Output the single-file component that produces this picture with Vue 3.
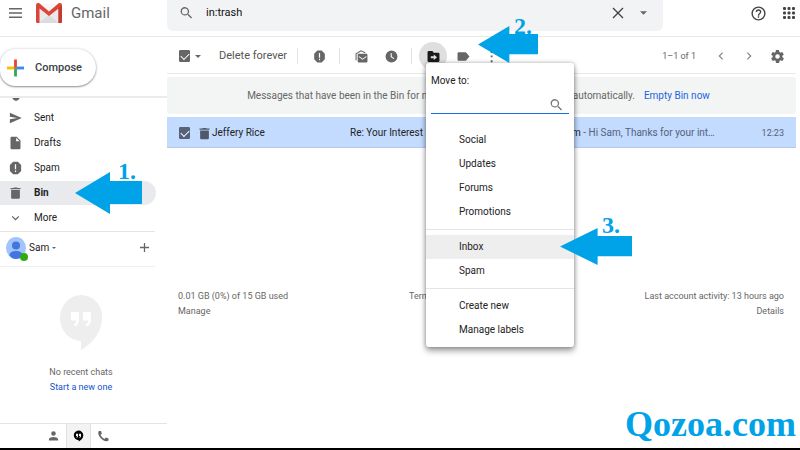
<script setup>
import { ref } from 'vue'

const query = ref('in:trash')
const labelFilter = ref('')
const allSelected = ref(true)
const rowSelected = ref(true)

const TRASH = 'M5 19c0 1.100.9 2 2 2h10c1.100 0 2-.9 2-2V7H5v12zM20 4h-4.500l-1-1h-5l-1 1H4v2h16V4z'
const SPAM = 'M8.300 2h7.400L21 7.300v9.400L15.700 22H8.300L3 16.700V7.300zM11 6v8h2V6zM11 16v2.300h2V16z'

const folders = [
  { name: 'Sent', path: 'M3 20.500L22 12 3 3.500v6.500l12 2-12 2z' },
  { name: 'Drafts', path: 'M6 2c-1.100 0-2 .9-2 2v16c0 1.100.9 2 2 2h12c1.100 0 2-.9 2-2V8l-6-6H6zm7 7V3.500L18.500 9H13z' },
  { name: 'Spam', path: SPAM },
  { name: 'Bin', path: TRASH, active: true },
  { name: 'More', path: 'M7.400 8.600L12 13.200l4.600-4.600L18 10l-6 6-6-6z' },
]

const menuGroups = [
  ['Social', 'Updates', 'Forums', 'Promotions'],
  ['Inbox', 'Spam'],
  ['Create new', 'Manage labels'],
]
</script>

<template>
  <div class="app">
    <header class="header">
      <div class="brand">
        <button class="icon-btn" aria-label="Main menu">
          <svg class="burger" viewBox="0 0 13 10"><path d="M0 0h13v1.500H0zM0 4.200h13v1.500H0zM0 8.400h13V10H0z" /></svg>
        </button>
        <svg class="logo" viewBox="0 0 26 21">
          <path d="M2 1h22v19H2z" fill="#e9e9e9" />
          <path d="M3 20l10-8 10 8z" fill="#dcdcdc" />
          <path d="M3 1l10 9 10-9z" fill="#f7f7f7" />
          <path d="M0 2Q0 0 2 0h1l10 8.500L23 0h1q2 0 2 2v16.500Q26 20 24.500 20H22.500V5.500L13 13 3.500 5.500V20h-2Q0 20 0 18.500z" fill="#db4437" />
          <path d="M22.500 5.500L26 2v16.500q0 1.500-1.500 1.500h-2z" fill="#c63b2f" />
        </svg>
        <span class="brand-name">Gmail</span>
      </div>
      <form class="search" role="search" @submit.prevent>
        <button class="icon-btn" aria-label="Search mail">
          <svg class="i-search" viewBox="2 2 20 20"><path d="M15.500 14h-.8l-.3-.3A6.500 6.500 0 1 0 13.700 14.400l.3.300v.8l5 5 1.500-1.500zM9.500 14a4.500 4.500 0 1 1 0-9 4.500 4.500 0 0 1 0 9z" /></svg>
        </button>
        <input v-model="query" class="search-input" type="text" aria-label="Search mail" />
        <button class="icon-btn" type="button" aria-label="Clear search">
          <svg class="i-close" viewBox="0 0 12 12"><path d="M1 1l10 10M11 1L1 11" fill="none" stroke="#444" stroke-width="1.400" /></svg>
        </button>
        <button class="icon-btn" type="button" aria-label="Search options">
          <svg class="i-caret" viewBox="0 0 8 4"><path d="M0 0h8L4 4z" /></svg>
        </button>
      </form>
      <div class="header-tools">
        <button class="icon-btn" aria-label="Support">
          <svg class="i-help" viewBox="0 0 24 24"><path d="M11 18h2v-2h-2zM12 2a10 10 0 1 0 0 20 10 10 0 0 0 0-20zm0 18a8 8 0 1 1 0-16 8 8 0 0 1 0 16zm0-14a4 4 0 0 0-4 4h2a2 2 0 1 1 4 0c0 2-3 1.800-3 5h2c0-2.300 3-2.500 3-5a4 4 0 0 0-4-4z" /></svg>
        </button>
        <button class="icon-btn" aria-label="Google apps">
          <svg class="i-apps" viewBox="0 0 12 12">
            <template v-for="r in 3" :key="r">
              <rect v-for="c in 3" :key="c" :x="(c - 1) * 4.5" :y="(r - 1) * 4.5" width="3" height="3" rx="1" />
            </template>
          </svg>
        </button>
      </div>
    </header>

    <div class="body">
      <aside class="sidebar">
        <div class="compose-area">
          <button class="compose">
            <svg class="plus" viewBox="0 0 18 18">
              <path d="M7.500 0h3v7.500l-3 3z" fill="#ea4335" />
              <path d="M0 7.500h7.500v3H0z" fill="#fbbc04" />
              <path d="M7.500 10.500l3-3V18h-3z" fill="#34a853" />
              <path d="M10.500 7.500H18v3h-7.500z" fill="#4285f4" />
            </svg>
            <span>Compose</span>
          </button>
        </div>
        <nav class="folders" aria-label="Folders">
          <svg class="clipped" viewBox="0 0 10 4"><path d="M0 0h10Q8 4 5 4T0 0z" /></svg>
          <a v-for="f in folders" :key="f.name" href="#" class="folder" :class="{ active: f.active }">
            <svg class="i-folder" viewBox="0 0 24 24"><path :d="f.path" fill-rule="evenodd" /></svg>
            <span>{{ f.name }}</span>
            <span v-if="f.active" class="callout callout-bin">
              <svg class="arrow arrow-wide" viewBox="0 0 67 42" preserveAspectRatio="none"><path d="M0 21L35 0v9h32v23H35v10z" /></svg>
              <span class="step">1.</span>
            </span>
          </a>
        </nav>
        <div class="account">
          <span class="avatar">
            <svg viewBox="0 0 20 22">
              <ellipse cx="10" cy="11" rx="10" ry="11" fill="#a2c4fb" />
              <circle cx="10" cy="8.500" r="4" fill="#4175df" />
              <path d="M3.500 18.500Q3.500 14 10 14t6.500 4.500Q14 22 10 22t-6.500-3.500z" fill="#4175df" />
            </svg>
            <i class="online"></i>
          </span>
          <button class="account-name">Sam <svg class="i-tiny" viewBox="0 0 8 4"><path d="M0 0h8L4 4z" /></svg></button>
          <button class="icon-btn add" aria-label="New conversation">
            <svg viewBox="0 0 10 10"><path d="M4.300 0h1.400v4.300H10v1.400H5.700V10H4.300V5.700H0V4.300h4.300z" /></svg>
          </button>
        </div>
        <div class="chats">
          <svg class="hangouts" viewBox="0 0 42 55">
            <path d="M21 0a21 21 0 0 1 21 22.500C42 37 33 48 21 55v-9A21 23 0 0 1 21 0z" fill="#eee" />
            <path d="M11 17h8v8q0 5-5 6.500v-2.500q2.500-1 2.500-3.500H11zM23 17h8v8q0 5-5 6.500v-2.500q2.500-1 2.500-3.500H23z" fill="#fff" />
          </svg>
          <p>No recent chats</p>
          <a href="#">Start a new one</a>
        </div>
        <div class="tabs">
          <button class="tab" aria-label="Contacts">
            <svg viewBox="0 0 24 24"><path d="M12 11.500a5 5 0 1 0 0-10 5 5 0 0 0 0 10zM2 22v-3c0-3.500 6-5 10-5s10 1.500 10 5v3z" /></svg>
          </button>
          <button class="tab on" aria-label="Conversations">
            <svg viewBox="0 0 24 24"><path d="M12 0a10.500 10.500 0 0 1 10.500 10.500C22.500 16.500 18 21.500 12.500 24v-3A10.500 10.500 0 1 1 12 0zM6.500 7v5h2.500c0 1-.5 1.700-1.500 2v1.800c2-.3 3.500-1.600 3.500-3.800V7zm6.500 0v5h2.500c0 1-.5 1.700-1.500 2v1.800c2-.3 3.500-1.600 3.500-3.800V7z" fill-rule="evenodd" /></svg>
          </button>
          <button class="tab" aria-label="Phone">
            <svg viewBox="0 0 24 24"><path d="M2 1h4.500l2 6-3 2.500c1.500 4 4.500 7 8.500 9l3-3 6 2V22c-1 1-3 1.500-5 1.500C9 22.500 1 13.500.5 5 .5 3 1 2 2 1z" /></svg>
          </button>
        </div>
      </aside>

      <main class="main">
        <div class="toolbar">
          <label class="check"><input v-model="allSelected" type="checkbox" aria-label="Select all" /></label>
          <button class="caret-btn" aria-label="Select options"><svg class="i-small" viewBox="0 0 8 4"><path d="M0 0h8L4 4z" /></svg></button>
          <button class="delete">Delete forever</button>
          <span class="sep"></span>
          <button class="tool" aria-label="Not spam"><svg viewBox="1 1 22 22"><path :d="SPAM" fill-rule="evenodd" /></svg></button>
          <span class="sep"></span>
          <button class="tool" aria-label="Mark as unread"><svg viewBox="0 0 24 24"><path d="M5 9q0-2 2-2h14q2 0 2 2v12q0 2-2 2H7q-2 0-2-2zm2 2v2l7 5 7-5v-2l-7 5z" fill-rule="evenodd" /><path d="M2 19V7l9-5.500L19 5M2 7" fill="none" stroke="#666" stroke-width="2" /></svg></button>
          <button class="tool" aria-label="Snooze"><svg viewBox="0 0 24 24"><path d="M12 1a11 11 0 1 0 0 22 11 11 0 0 0 0-22zm-1.500 5h2v6l4.500 3-1 1.600-5.500-3.600z" fill-rule="evenodd" /></svg></button>
          <span class="sep"></span>
          <div class="move">
            <button class="tool pressed" aria-label="Move to" aria-expanded="true"><svg viewBox="0 0 24 24"><path d="M3 2h7l2.500 3H21q2 0 2 2v13q0 2-2 2H3q-2 0-2-2V4q0-2 2-2zm9.500 6.500v3.200H7v3.600h5.500v3.200L18.500 13.500z" fill-rule="evenodd" /></svg></button>
            <div class="menu">
              <label class="menu-title" for="label-filter">Move to:</label>
              <div class="menu-search">
                <input id="label-filter" v-model="labelFilter" type="text" />
                <svg class="i-menu-search" viewBox="2 2 20 20"><path d="M15.500 14h-.8l-.3-.3A6.500 6.500 0 1 0 13.700 14.400l.3.300v.8l5 5 1.500-1.500zM9.500 14a4.500 4.500 0 1 1 0-9 4.500 4.500 0 0 1 0 9z" /></svg>
              </div>
              <ul v-for="(group, i) in menuGroups" :key="i" class="menu-group">
                <li v-for="item in group" :key="item">
                  <button class="menu-item" :class="{ hover: item === 'Inbox' }">{{ item }}</button>
                </li>
              </ul>
            </div>
            <span class="callout callout-move">
              <svg class="arrow" viewBox="0 0 67 42" preserveAspectRatio="none"><path d="M0 21L35 0v9h32v23H35v10z" /></svg>
              <span class="step">2.</span>
            </span>
            <span class="callout callout-inbox">
              <svg class="arrow arrow-mid" viewBox="0 0 67 42" preserveAspectRatio="none"><path d="M0 21L35 0v9h32v23H35v10z" /></svg>
              <span class="step">3.</span>
            </span>
          </div>
          <button class="tool" aria-label="Labels"><svg viewBox="0 0 24 24"><path d="M3 4h12.500q1 0 1.800 1L23 12l-5.700 7q-.8 1-1.800 1H3q-2 0-2-2V6q0-2 2-2z" /></svg></button>
          <button class="tool narrow" aria-label="More"><svg viewBox="0 0 24 24"><path d="M10.500 2h3.500v3.500h-3.500zM10.500 10h3.500v3.500h-3.500zM10.500 19h3.500v3.500h-3.500z" /></svg></button>
          <span class="count">1–1 of 1</span>
          <button class="tool pager" aria-label="Newer"><svg viewBox="0 0 24 24"><path d="M16 4l-8 8 8 8" fill="none" stroke="#888" stroke-width="3" /></svg></button>
          <button class="tool pager" aria-label="Older"><svg viewBox="0 0 24 24"><path d="M8 4l8 8-8 8" fill="none" stroke="#888" stroke-width="3" /></svg></button>
          <button class="tool settings" aria-label="Settings"><svg viewBox="2 2 20 20"><path d="M19.400 13a7.500 7.500 0 0 0 0-2l2.100-1.600a.5.500 0 0 0 .1-.6l-2-3.500a.5.500 0 0 0-.6-.2l-2.500 1a7.300 7.300 0 0 0-1.700-1l-.4-2.600a.5.500 0 0 0-.5-.4h-4a.5.500 0 0 0-.5.400L9.100 5.100a7.700 7.700 0 0 0-1.700 1l-2.500-1a.5.500 0 0 0-.6.200l-2 3.500a.5.500 0 0 0 .1.600L4.600 11a7.900 7.900 0 0 0 0 2l-2.100 1.600a.5.500 0 0 0-.1.600l2 3.500c.1.200.4.300.6.200l2.500-1c.5.400 1.100.7 1.700 1l.4 2.600c0 .2.200.4.500.4h4c.2 0 .5-.2.500-.4l.4-2.600a7.300 7.300 0 0 0 1.700-1l2.500 1c.2.100.5 0 .6-.2l2-3.500a.5.500 0 0 0-.1-.6zM12 15.500a3.500 3.500 0 1 1 0-7 3.500 3.500 0 0 1 0 7z" fill-rule="evenodd" /></svg></button>
        </div>

        <div class="banner">
          <span>Messages that have been in the Bin for more than 30 days will be deleted automatically.</span>
          <a href="#">Empty Bin now</a>
        </div>

        <div class="mail">
          <label class="check"><input v-model="rowSelected" type="checkbox" aria-label="Select message" /></label>
          <svg class="i-bin" viewBox="0 0 24 24"><path :d="TRASH" /></svg>
          <span class="sender">Jeffery Rice</span>
          <div class="message">
            <span class="subject">Re: Your Interest in</span>
            <span class="snippet"><b>m</b> - Hi Sam, Thanks for your int…</span>
          </div>
          <time>12:23</time>
        </div>

        <footer class="footer">
          <div>0.01 GB (0%) of 15 GB used<br /><a href="#">Manage</a></div>
          <div class="center"><a href="#">Terms</a></div>
          <div class="right">Last account activity: 13 hours ago<br /><a href="#">Details</a></div>
        </footer>
        <div class="watermark">Qozoa.com</div>
      </main>
    </div>
  </div>
</template>

<style>
body {
  margin: 0;
  background: #fff;
}
</style>

<style scoped>
* {
  box-sizing: border-box;
}

.app {
  display: flex;
  flex-direction: column;
  min-height: 100vh;
  overflow: hidden;
  border-bottom: 2px solid #000;
  font: 10px/16px Roboto, "Liberation Sans", sans-serif;
  color: #222;
}

svg {
  display: block;
  fill: #666;
}

a {
  color: inherit;
  text-decoration: none;
}

button,
input {
  margin: 0;
  padding: 0;
  border: 0;
  background: none;
  font: inherit;
  color: inherit;
  outline: none;
}

.icon-btn {
  display: flex;
  align-items: center;
  justify-content: center;
}

/* Header */
.header {
  display: flex;
  height: 37px;
  border-bottom: 1px solid #e8e8e8;
}

.brand {
  display: flex;
  align-items: center;
  width: 167px;
  height: 26px;
  padding-left: 9px;
}

.burger {
  width: 13px;
  height: 10px;
}

.logo {
  width: 26px;
  height: 21px;
  margin-left: 14px;
}

.brand-name {
  margin-left: 9px;
  font-size: 15px;
  color: #666;
}

.search {
  display: flex;
  align-items: center;
  flex: 1;
  height: 31px;
  padding: 0 16px 6px 13px;
  border-radius: 0 0 6px 6px;
  background: #f1f3f4;
}

.search-input {
  flex: 1;
  min-width: 0;
  padding-left: 13px;
  font-size: 11px;
  color: #111;
}

.i-search {
  width: 13px;
  height: 14px;
}

.i-close {
  width: 12px;
  height: 12px;
  margin-right: 16px;
}

.i-caret {
  width: 7px;
  height: 4px;
}

.header-tools {
  display: flex;
  align-items: center;
  justify-content: flex-end;
  gap: 16px;
  width: 137px;
  height: 26px;
  padding-right: 5px;
}

.i-help {
  width: 17px;
  height: 17px;
  fill: #444;
}

.i-apps {
  width: 12px;
  height: 12px;
  fill: #444;
}

.body {
  display: flex;
  flex: 1;
}

/* Sidebar */
.sidebar {
  display: flex;
  flex-direction: column;
  flex: none;
  width: 167px;
}

.compose-area {
  padding: 12px 0 10px;
  border-bottom: 2px solid #ebebeb;
}

.compose {
  display: flex;
  align-items: center;
  gap: 11px;
  width: 96px;
  height: 37px;
  padding-left: 7px;
  border-radius: 16px 19px 19px 16px;
  box-shadow: 0 1px 2px rgba(0, 0, 0, 0.4), 0 0 3px rgba(0, 0, 0, 0.15);
  font-size: 11px;
  font-weight: 500;
  color: #3c4043;
}

.plus {
  width: 17px;
  height: 18px;
}

.folders {
  display: flex;
  flex-direction: column;
  gap: 1px;
  padding-bottom: 1px;
}

.clipped {
  width: 10px;
  height: 3px;
  margin: 0 0 4px 11px;
}

.folder {
  position: relative;
  display: flex;
  align-items: center;
  gap: 11px;
  height: 24px;
  width: 156px;
  padding-left: 8px;
  border-radius: 0 12px 12px 0;
}

.folder.active {
  background: #e8eaed;
  font-weight: 700;
  color: #202124;
}

.i-folder {
  width: 15px;
  height: 16px;
}

.account {
  display: flex;
  align-items: center;
  height: 36px;
  margin-right: 12px;
  padding: 0 6px 3px;
  border-top: 1px solid #e4e4e4;
  border-bottom: 1px solid #eee;
}

.avatar {
  position: relative;
  width: 20px;
  height: 22px;
}

.online {
  position: absolute;
  right: -2px;
  bottom: -2px;
  width: 8px;
  height: 8px;
  border-radius: 50%;
  background: #30a912;
}

.account-name {
  display: flex;
  align-items: center;
  gap: 3px;
  margin-left: 3px;
}

.i-tiny {
  width: 4px;
  height: 2px;
}

.add {
  margin-left: auto;
}

.add svg {
  width: 9px;
  height: 9px;
}

.chats {
  display: flex;
  flex-direction: column;
  align-items: center;
  flex: 1;
  padding: 28px 5px 0 0;
  font-size: 9px;
  line-height: 15px;
  color: #666;
}

.chats p {
  margin: 15px 0 0;
}

.chats a {
  color: #15c;
}

.hangouts {
  width: 42px;
  height: 55px;
}

.tabs {
  display: flex;
  height: 25px;
  padding-left: 41px;
  border-top: 1px solid #e4e4e4;
}

.tab {
  display: flex;
  align-items: center;
  justify-content: center;
  width: 25px;
}

.tab svg {
  width: 11px;
  height: 12px;
}

.tab.on {
  border: 1px solid #e0e0e0;
  border-width: 0 1px;
  background: #f3f3f3;
}

.tab.on svg {
  fill: #000;
}

/* Main column */
.main {
  display: flex;
  flex-direction: column;
  flex: 1;
  min-width: 0;
  padding-right: 4px;
}

.toolbar {
  display: flex;
  align-items: center;
  gap: 2px;
  height: 37px;
  padding: 2px 6px 0 12px;
  border-bottom: 1px solid #e8e8e8;
}

.check input {
  display: block;
  appearance: none;
  width: 11px;
  height: 12px;
  border: 1px solid #666;
  border-radius: 1px;
}

.check input:checked {
  background: #666;
}

.check input:checked::after {
  content: "";
  display: block;
  width: 7px;
  height: 4px;
  margin: 2px 0 0 1px;
  border: solid #fff;
  border-width: 0 0 1px 1px;
  transform: rotate(-45deg);
}

.caret-btn {
  display: flex;
  justify-content: center;
  width: 12px;
}

.i-small {
  width: 6px;
  height: 3px;
}

.delete {
  width: 76px;
  margin-left: 13px;
  white-space: nowrap;
  text-align: left;
  font-size: 11px;
  color: #555;
}

.sep {
  width: 1px;
  height: 16px;
  margin-right: 5px;
  background: #e4e4e4;
}

.tool + .sep {
  margin-left: 4px;
}

.tool {
  display: flex;
  align-items: center;
  justify-content: center;
  width: 28px;
  height: 28px;
  border-radius: 50%;
}

.tool svg {
  width: 13px;
  height: 13px;
}

.tool.narrow {
  width: 24px;
}

.tool.pager,
.tool.settings {
  width: 26px;
}

.tool.pager svg {
  width: 10px;
  height: 10px;
}

.tool.pressed {
  background: #dfdfdf;
}

.tool.pressed svg {
  fill: #1a1a1a;
}

.count {
  margin-left: auto;
  margin-right: 10px;
  font-size: 9px;
  color: #666;
}

.move {
  position: relative;
}

.menu {
  position: absolute;
  z-index: 1;
  top: 21px;
  left: 7px;
  width: 148px;
  padding-top: 10px;
  border-radius: 3px;
  background: #fff;
  box-shadow: 0 4px 6px rgba(0, 0, 0, 0.35), 0 0 4px rgba(0, 0, 0, 0.3);
}

.menu-title {
  display: block;
  padding-left: 5px;
}

.menu-search {
  display: flex;
  align-items: flex-end;
  height: 25px;
  margin: 0 5px 9px;
  border-bottom: 1px solid #1a6be0;
}

.menu-search input {
  flex: 1;
  min-width: 0;
}

.i-menu-search {
  width: 13px;
  height: 14px;
  margin: 0 6px 1px 0;
  fill: #777;
}

.menu-group {
  margin: 0;
  padding: 5px 0;
  list-style: none;
}

.menu-group + .menu-group {
  border-top: 1px solid #e4e4e4;
}

.menu-item {
  display: block;
  width: 100%;
  height: 24px;
  padding-left: 33px;
  text-align: left;
}

.menu-item.hover {
  background: #eee;
}

.banner {
  display: flex;
  align-items: center;
  justify-content: center;
  gap: 9px;
  height: 37px;
  margin-top: 3px;
  padding-right: 6px;
  border-radius: 3px;
  background: #f3f4f4;
  color: #666;
  white-space: nowrap;
}

.banner a {
  color: #1a66e0;
}

.mail {
  display: flex;
  align-items: center;
  height: 31px;
  margin-top: 3px;
  padding: 2px 12px 0;
  border-bottom: 1px solid #b4caea;
  background: #c2dbff;
  color: #222;
  white-space: nowrap;
}

.mail .check input {
  border-color: #56617a;
  background: #56617a;
}

.i-bin {
  width: 15px;
  height: 17px;
  margin-left: 7px;
  fill: #4f596b;
}

.sender {
  width: 138px;
}

.message {
  display: flex;
  flex: 1;
  min-width: 0;
}

.subject {
  width: 222px;
  overflow: hidden;
}

.snippet {
  color: #56617a;
}

.snippet b {
  font-weight: 400;
  color: #222;
}

.mail time {
  font-size: 9px;
  color: #56617a;
}

.footer {
  display: grid;
  grid-template-columns: 231px auto 1fr;
  padding: 141px 12px 0 11px;
  font-size: 9px;
  line-height: 15px;
  color: #666;
}

.right {
  text-align: right;
}

.watermark {
  margin-top: auto;
  padding-bottom: 4px;
  text-align: right;
  font: 700 36px/40px "Liberation Serif", serif;
  color: #00a2e8;
}

/* Step callouts */
.callout {
  position: absolute;
  z-index: 2;
}

.callout-bin {
  top: -9px;
  left: 75px;
}

.callout-move {
  top: -16px;
  left: 59px;
}

.callout-inbox {
  top: 186px;
  left: 141px;
}

.arrow {
  width: 60px;
  height: 37px;
  fill: #00a2e8;
}

.arrow-wide {
  width: 67px;
  height: 42px;
}

.arrow-mid {
  width: 72px;
}

.step {
  position: absolute;
  right: 6px;
  bottom: 25px;
  font: 700 24px/24px "Liberation Serif", serif;
  color: #00a2e8;
}

.callout-bin .step {
  bottom: 31px;
}

.callout-inbox .step {
  right: 12px;
  bottom: 28px;
}
</style>
